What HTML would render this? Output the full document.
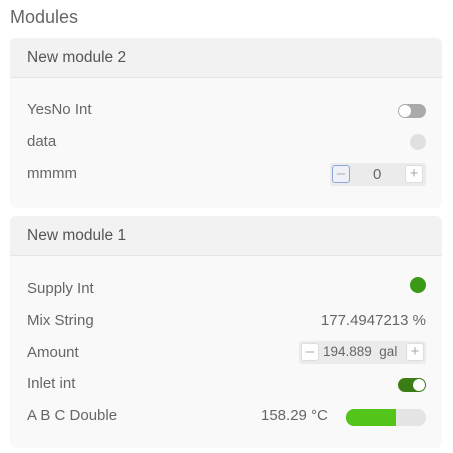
<!DOCTYPE html><html><head><style>
body{margin:0;width:453px;height:453px;background:#fff;font-family:"Liberation Sans",sans-serif;color:#666;position:relative;overflow:hidden}
.a{position:absolute}
.card{position:absolute;left:10px;width:432px;background:#f9f9f9;border-radius:6px;overflow:hidden}
.hd{height:39px;background:#f2f2f2;border-bottom:1px solid #e6e6e6;font-size:15.5px;line-height:39px;padding-left:17px;color:#555}
.lbl{position:absolute;left:17px;font-size:15px;color:#666}
.btn{position:absolute;width:16px;height:16px;border:1px solid #ddd;background:#fff;border-radius:3px;color:#aaa;font-size:15px;line-height:15px;text-align:center}
</style></head><body>
<div class="a" style="left:10px;top:7px;font-size:18px;color:#666">Modules</div>
<div class="card" style="top:38px;height:170px">
<div class="hd">New module 2</div>
<div class="lbl" style="top:63px">YesNo Int</div>
<div class="lbl" style="top:95px">data</div>
<div class="lbl" style="top:127px">mmmm</div>
<div class="a" style="left:388px;top:66px;width:28px;height:14px;border-radius:7px;background:#aaa"></div>
<div class="a" style="left:389px;top:67px;width:12px;height:12px;border-radius:6px;background:#fff"></div>
<div class="a" style="left:400px;top:96px;width:16px;height:16px;border-radius:8px;background:#e0e0e0"></div>
<div class="a" style="left:320px;top:125px;width:96px;height:23px;background:#ebebeb;border-radius:3px"></div>
<div class="btn" style="left:322px;top:127px;border-color:#8fa6d8;background:#eef1f8">–</div>
<div class="btn" style="left:395px;top:127px">+</div>
<div class="a" style="left:363px;top:128px;font-size:15px;color:#666">0</div>
</div>
<div class="card" style="top:216px;height:232px">
<div class="hd">New module 1</div>
<div class="lbl" style="top:64px">Supply Int</div>
<div class="lbl" style="top:96px">Mix String</div>
<div class="lbl" style="top:128px">Amount</div>
<div class="lbl" style="top:159px">Inlet int</div>
<div class="lbl" style="top:191px">A B C Double</div>
<div class="a" style="left:400px;top:61px;width:16px;height:16px;border-radius:8px;background:#3a9a17"></div>
<div class="a" style="right:16px;top:96px;font-size:15px;color:#666">177.4947213 %</div>
<div class="a" style="left:289px;top:125px;width:127px;height:23px;background:#ebebeb;border-radius:3px"></div>
<div class="btn" style="left:291px;top:127px">–</div>
<div class="btn" style="left:396px;top:127px">+</div>
<div class="a" style="left:313px;top:128px;font-size:13.5px;color:#666">194.889&nbsp; gal</div>
<div class="a" style="left:388px;top:162px;width:28px;height:14px;border-radius:7px;background:#3a7d15"></div>
<div class="a" style="left:403px;top:163px;width:12px;height:12px;border-radius:6px;background:#fff"></div>
<div class="a" style="left:251px;top:191px;font-size:15px;color:#666">158.29 °C</div>
<div class="a" style="left:336px;top:193px;width:80px;height:17px;border-radius:8px;background:#e5e5e5;overflow:hidden"><div style="width:50px;height:17px;background:#52c41a"></div></div>
</div>
</body></html>
